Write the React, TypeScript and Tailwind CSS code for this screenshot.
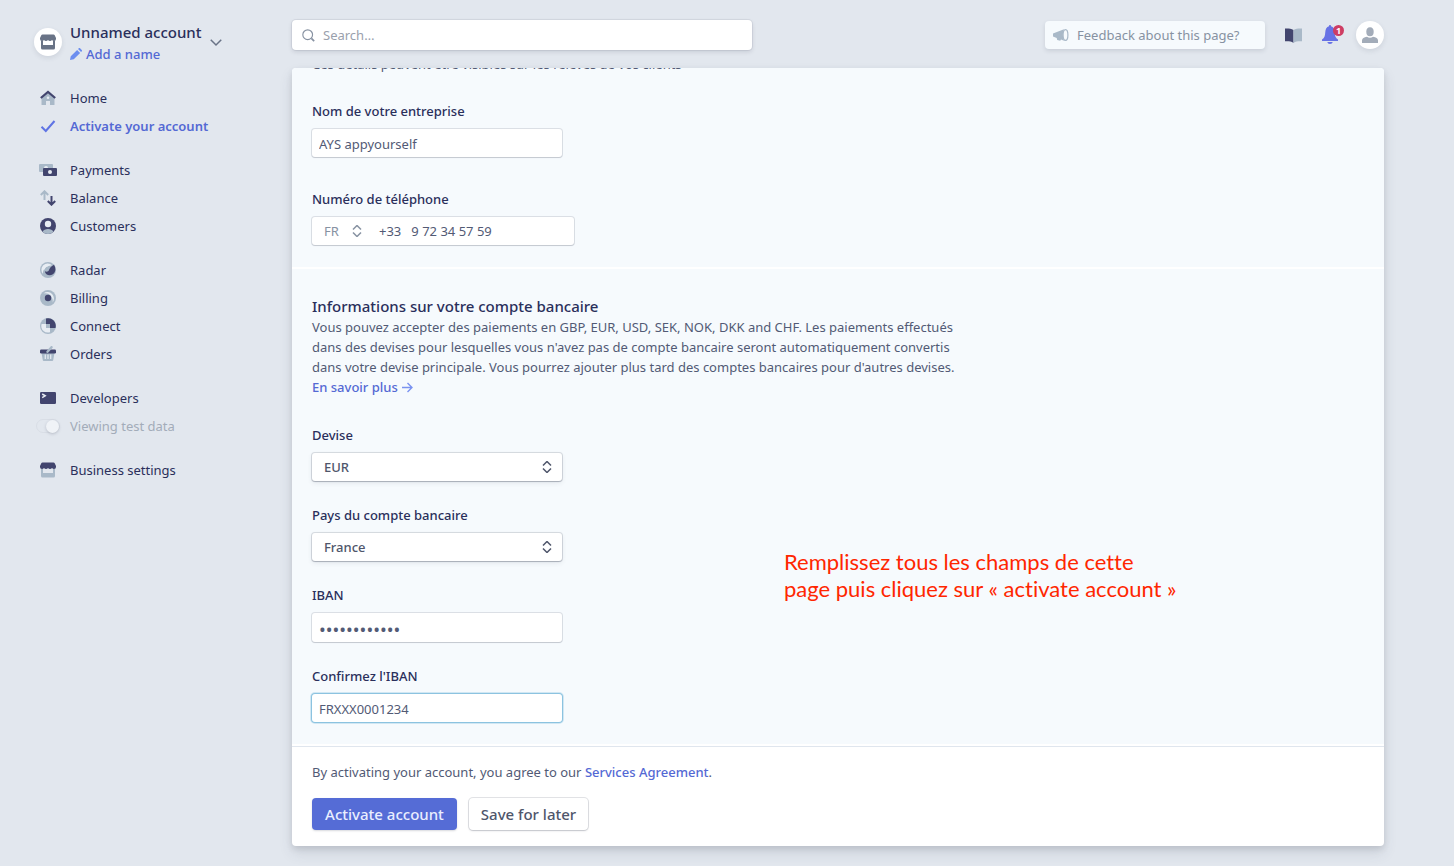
import { useState } from 'react'
import type { ReactNode } from 'react'
import clsx from 'clsx'

const DARK = '#42456e'
const LIGHT = '#a9b9c8'
const PAPER = '#e8edf3'

function Icon({ children, size = 16 }: { children: ReactNode; size?: number }) {
  return (
    <svg width={size} height={size} viewBox="0 0 16 16" fill="none" aria-hidden="true" className="shrink-0">
      {children}
    </svg>
  )
}

function StoreIcon({ top = DARK, base = LIGHT, size = 16 }: { top?: string; base?: string; size?: number }) {
  return (
    <Icon size={size}>
      <path d="M1 6.500h2V11h10V6.500h2V14a1.500 1.500 0 0 1-1.500 1.500h-11A1.500 1.500 0 0 1 1 14z" fill={base} />
      <path d="M2.500.5h11c.6 0 1 .3 1.200.8L16 4v1a2 2 0 0 1-2 2c-.8 0-1.500-.4-2-1-.5.600-1.200 1-2 1s-1.500-.4-2-1c-.5.600-1.200 1-2 1s-1.500-.4-2-1c-.5.600-1.200 1-2 1a2 2 0 0 1-2-2V4l1.300-2.700c.2-.5.600-.8 1.200-.8z" fill={top} />
    </Icon>
  )
}

const icons = {
  home: (
    <Icon>
      <path d="M8 3l6.500 5v6.500a.5.5 0 0 1-.5.5h-4v-4H6v4H2a.5.5 0 0 1-.5-.5V8z" fill={LIGHT} />
      <circle cx="8" cy="7.700" r="1.300" fill={PAPER} />
      <path d="M.8 8L8 2l7.200 6" stroke={DARK} strokeWidth="2.200" />
    </Icon>
  ),
  check: (
    <Icon>
      <path d="M1.500 8.800l4.300 4.200L14.500 3" stroke="#5f74e4" strokeWidth="2" />
    </Icon>
  ),
  payments: (
    <svg width="18" height="16" viewBox="0 0 18 16" fill="none" aria-hidden="true">
      <rect x="0" y="2" width="14" height="8" rx="1" fill={LIGHT} />
      <circle cx="7" cy="6" r="2" fill={PAPER} />
      <rect x="4" y="6" width="14" height="8" rx="1" fill={DARK} />
      <circle cx="11" cy="10" r="2" fill={PAPER} />
    </svg>
  ),
  balance: (
    <Icon>
      <path d="M4.500 10V1.500M.8 5l3.700-3.700L8.200 5" stroke={LIGHT} strokeWidth="2" />
      <path d="M11.500 6v8.500M7.800 11l3.700 3.700 3.700-3.700" stroke={DARK} strokeWidth="2" />
    </Icon>
  ),
  customers: (
    <Icon>
      <circle cx="8" cy="8" r="8" fill={DARK} />
      <path d="M2.500 13.800a8 8 0 0 0 11 0C12.500 11.800 10.500 11 8 11s-4.500.8-5.500 2.800z" fill={LIGHT} />
      <circle cx="8" cy="6" r="3.200" fill={PAPER} />
    </Icon>
  ),
  radar: (
    <Icon>
      <circle cx="8" cy="8" r="8" fill={LIGHT} />
      <path d="M12 3.200A6.300 6.300 0 0 0 3 12C2.600 8 5 4 12 3.200z" fill={PAPER} />
      <path d="M4 7.500A4.500 4.500 0 0 1 8 3.500" stroke={PAPER} strokeWidth="1.600" />
      <path d="M14 2.700c2.300 3.500 1.700 8-1.500 9.800-3.100 1.700-7.400.2-7.600-3.300C6.800 10.200 8.500 9.300 9 8c.6-1.900 2-3.600 5-5.300z" fill={DARK} />
    </Icon>
  ),
  billing: (
    <Icon>
      <circle cx="8" cy="8" r="8" fill={LIGHT} />
      <path d="M3.500 3.500A6.400 6.400 0 0 1 12.500 12.500C14 7.500 9 2 3.500 3.500z" fill={PAPER} />
      <circle cx="8" cy="8" r="3.200" fill={DARK} />
    </Icon>
  ),
  connect: (
    <Icon>
      <circle cx="8" cy="8" r="8" fill={LIGHT} />
      <path d="M10 6v8.200A6.600 6.600 0 0 1 1.600 6z" fill={PAPER} />
      <path d="M6 10V.4A7.800 7.800 0 0 1 15.500 10z" fill={DARK} />
      <path d="M6 6h4v4H6z" fill={LIGHT} />
    </Icon>
  ),
  orders: (
    <Icon>
      <path d="M1.500 7h13l-1.300 7.200a1 1 0 0 1-1 .8H3.800a1 1 0 0 1-1-.8z" fill={LIGHT} />
      <path d="M5.300 8.500v4.500M8 8.500v4.500M10.700 8.500v4.500" stroke={PAPER} strokeWidth="1.200" />
      <rect x="0" y="3.500" width="16" height="4" rx="1.200" fill={DARK} />
      <path d="M7.500 5.800L11.500 1.200" stroke={LIGHT} strokeWidth="2.400" strokeLinecap="round" />
    </Icon>
  ),
  developers: (
    <Icon>
      <rect x="0" y="2" width="16" height="12" rx="1.200" fill={DARK} />
      <path d="M2.200 4l3 1.800-3 1.800" stroke={PAPER} strokeWidth="1.500" />
    </Icon>
  ),
  store: <StoreIcon />,
}

type NavItem = { label: string; icon: keyof typeof icons; active?: boolean }

const NAV: NavItem[][] = [
  [
    { label: 'Home', icon: 'home' },
    { label: 'Activate your account', icon: 'check', active: true },
  ],
  [
    { label: 'Payments', icon: 'payments' },
    { label: 'Balance', icon: 'balance' },
    { label: 'Customers', icon: 'customers' },
  ],
  [
    { label: 'Radar', icon: 'radar' },
    { label: 'Billing', icon: 'billing' },
    { label: 'Connect', icon: 'connect' },
    { label: 'Orders', icon: 'orders' },
  ],
  [{ label: 'Developers', icon: 'developers' }],
  [{ label: 'Business settings', icon: 'store' }],
]

function NavLink({ item }: { item: NavItem }) {
  return (
    <a href="#" className={clsx('flex h-7 items-center gap-2', item.active ? 'font-semibold text-[#5469d4]' : 'text-[#2a2f5b]')}>
      <span className="flex w-7 justify-center">{icons[item.icon]}</span>
      {item.label}
    </a>
  )
}

function Sidebar() {
  const [testData, setTestData] = useState(true)
  return (
    <aside className="w-[284px] shrink-0 pt-5 pl-[34px]">
      <div className="flex items-center gap-2">
        <span className="flex size-7 items-center justify-center rounded-full bg-white shadow-[0_2px_5px_rgba(60,66,87,0.12)]">
          <StoreIcon top="#697386" base="#697386" />
        </span>
        <div>
          <button className="block text-[15px] leading-6 font-medium text-[#2a2f5b]">Unnamed account</button>
          <a href="#" className="flex items-center gap-1 font-medium text-[#5469d4]">
            <Icon size={12}>
              <path d="M0 16l1-5 8.500-8.500 4 4L5 15zM10.700 1.300l1-1a1.200 1.200 0 0 1 1.700 0l2.300 2.300a1.200 1.200 0 0 1 0 1.700l-1 1z" fill="#6c8eef" />
            </Icon>
            Add a name
          </a>
        </div>
        <Icon size={12}>
          <path d="M1 5l7 7 7-7" stroke="#697386" strokeWidth="2" />
        </Icon>
      </div>
      <nav className="mt-5 flex flex-col gap-4">
        {NAV.map((group, i) => (
          <div key={i}>
            {group.map((item) => <NavLink key={item.label} item={item} />)}
            {group[0].icon === 'developers' && (
              <label className="flex h-7 items-center gap-2 text-[#a3acb9]">
                <span className="flex w-7 justify-center">
                  <input
                    type="checkbox"
                    role="switch"
                    checked={testData}
                    onChange={(e) => setTestData(e.target.checked)}
                    className="flex h-[14px] w-6 appearance-none items-center rounded-full border border-[#d9dee6] before:size-[13px] before:rounded-full before:bg-[#f0f3f7] before:shadow-[0_1px_3px_rgba(60,66,87,0.25)] checked:justify-end"
                  />
                </span>
                Viewing test data
              </label>
            )}
          </div>
        ))}
      </nav>
    </aside>
  )
}

function TopBar() {
  return (
    <header className="flex items-center">
      <label className="flex h-[30px] w-[460px] items-center gap-2 rounded-sm bg-white px-[10px] shadow-[0_0_0_1px_rgba(60,66,87,0.08),0_2px_4px_rgba(60,66,87,0.16)]">
        <Icon size={13}>
          <circle cx="7" cy="7" r="6" stroke="#8792a2" strokeWidth="1.400" />
          <path d="M11.500 11.500l3.500 3.500" stroke="#8792a2" strokeWidth="2" />
        </Icon>
        <input aria-label="Search" placeholder="Search…" className="min-w-0 flex-1 outline-none placeholder:text-[#9aa1ad]" />
      </label>
      <div className="ml-auto flex items-center">
        <button className="flex h-7 w-[220px] items-center gap-2 rounded-sm bg-[#f6fafd] pl-2 text-[#8792a2] shadow-[0_2px_4px_rgba(60,66,87,0.14)]">
          <Icon>
            <path d="M0 6.500L11 2.300c-1.500 3.400-1.500 8 0 11.400l-3-1.200-.8 1.200-3-.8-.5-2L0 9.500z" fill={LIGHT} />
            <ellipse cx="12.500" cy="8" rx="2.400" ry="5.400" stroke={LIGHT} strokeWidth="1.200" />
          </Icon>
          Feedback about this page?
        </button>
        <button aria-label="Documentation" className="ml-5">
          <svg width="17" height="16" viewBox="0 0 17 16" aria-hidden="true">
            <path d="M0 1.500c3 0 6-.2 8.500 1.500v13C6 14 3 14.300 0 14.300z" fill={DARK} />
            <path d="M17 1.500c-3 0-6-.2-8.500 1.500v13c2.500-2 5.500-1.700 8.500-1.700z" fill={LIGHT} />
          </svg>
        </button>
        <button aria-label="Notifications" className="relative ml-5">
          <svg width="16" height="20" viewBox="0 0 16 20" aria-hidden="true">
            <path d="M8 0c.7 0 1 .5 1 1.300C11.500 2 12.500 4 12.700 7c.2 4 .8 6 3.300 7.500V16H0v-1.500C2.500 13 3 11 3.300 7 3.500 4 4.500 2 7 1.300 7 .5 7.300 0 8 0zM5.300 17h5.400c-.3 1.300-1.300 2-2.700 2s-2.400-.7-2.700-2z" fill="#6772e5" />
          </svg>
          <span className="absolute top-0 left-[11px] flex size-[11px] items-center justify-center rounded-full bg-[#cd3d64] text-[9px] leading-none font-bold text-white">1</span>
        </button>
        <button aria-label="Profile" className="ml-[18px] flex size-7 items-center justify-center rounded-full bg-white shadow-[0_2px_5px_rgba(60,66,87,0.12)]">
          <Icon>
            <ellipse cx="8" cy="4.700" rx="3.700" ry="4.500" fill="#a3acb9" />
            <path d="M0 16v-2.500C0 11.500 2 10.300 5 9.800c1.800 1.200 4.200 1.200 6 0 3 .5 5 1.700 5 3.700V16z" fill="#a3acb9" />
          </Icon>
        </button>
      </div>
    </header>
  )
}

const fieldRing = 'shadow-[0_0_0_1px_rgba(60,66,87,0.14),0_1px_1px_rgba(60,66,87,0.14)]'

function Field({ id, label, children }: { id: string; label: string; children: ReactNode }) {
  return (
    <div>
      <label htmlFor={id} className="mb-2 block w-fit font-medium text-[#2a2f5b]">{label}</label>
      {children}
    </div>
  )
}

function Chevrons({ className }: { className?: string }) {
  return (
    <svg width="10" height="12" viewBox="0 0 10 12" fill="none" stroke="currentColor" strokeWidth="1.500" aria-hidden="true"
      className={clsx('pointer-events-none absolute top-2', className)}>
      <path d="M1 4.500l4-4 4 4M1 7.500l4 4 4-4" />
    </svg>
  )
}

function Select({ id, options }: { id: string; options: string[] }) {
  return (
    <div className="relative w-[250px] text-[#4f566b]">
      <select id={id} className="h-7 w-full appearance-none rounded-[3px] bg-white pl-3 font-medium text-[#4f566b] shadow-[0_0_0_1px_rgba(60,66,87,0.16),0_1px_1px_rgba(60,66,87,0.24),0_2px_5px_rgba(60,66,87,0.1)]">
        {options.map((o) => <option key={o}>{o}</option>)}
      </select>
      <Chevrons className="right-[10px]" />
    </div>
  )
}

const inputClass = 'block w-[250px] rounded-[3px] bg-white px-[7px] pt-0.5'

export default function App() {
  return (
    <div className="flex min-h-screen bg-[#e2e7ee] font-['Noto_Sans',sans-serif] text-[13px] leading-5 text-[#525a75]">
      <Sidebar />
      <main className="min-w-0 flex-1 pt-5 pr-[70px] pb-5 pl-2">
        <TopBar />
        <div className="mt-[18px] overflow-hidden rounded bg-white shadow-[0_7px_14px_rgba(60,66,87,0.12),0_3px_6px_rgba(0,0,0,0.1)]">
          <section className="bg-[#f6fafd] px-5 pb-[22px]">
            {/* scrolled out under the top edge of the panel */}
            <p className="-mt-[14px] mb-[27px]">Ces détails peuvent être visibles sur les relevés de vos clients</p>
            <div className="flex flex-col gap-8">
              <Field id="company" label="Nom de votre entreprise">
                <input id="company" defaultValue="AYS appyourself" className={clsx(inputClass, fieldRing, 'h-7')} />
              </Field>
              <Field id="phone" label="Numéro de téléphone">
                <div className={clsx('flex h-7 w-[262px] items-center rounded-[3px] bg-white', fieldRing)}>
                  <div className="relative h-7 w-[67px] text-[#8792a2]">
                    <select aria-label="Indicatif du pays" className="h-full w-full appearance-none pl-3">
                      <option>FR</option>
                    </select>
                    <Chevrons className="left-10" />
                  </div>
                  <span>+33</span>
                  <input id="phone" type="tel" defaultValue="9 72 34 57 59" className="ml-[10px] min-w-0 flex-1 outline-none" />
                </div>
              </Field>
            </div>
          </section>

          <section className="relative mt-0.5 bg-[#f6fafd] px-5 pt-[26px] pb-[22px]">
            <h2 className="text-[15px] leading-[22px] font-medium text-[#2a2f5b]">Informations sur votre compte bancaire</h2>
            <p className="max-w-[664px]">
              Vous pouvez accepter des paiements en GBP, EUR, USD, SEK, NOK, DKK and CHF. Les paiements effectués
              dans des devises pour lesquelles vous n'avez pas de compte bancaire seront automatiquement convertis
              dans votre devise principale. Vous pourrez ajouter plus tard des comptes bancaires pour d'autres devises.
            </p>
            <a href="#" className="flex w-fit items-center gap-1 font-medium text-[#5469d4]">
              En savoir plus
              <Icon size={11}>
                <path d="M0 8h14M8 1.500L14.500 8 8 14.500" stroke="#7a92f0" strokeWidth="2" />
              </Icon>
            </a>
            <div className="mt-7 flex flex-col gap-6">
              <Field id="currency" label="Devise">
                <Select id="currency" options={['EUR', 'GBP', 'USD', 'SEK', 'NOK', 'DKK', 'CHF']} />
              </Field>
              <Field id="country" label="Pays du compte bancaire">
                <Select id="country" options={['France']} />
              </Field>
              <Field id="iban" label="IBAN">
                <input id="iban" type="password" defaultValue="FRXXX0001234" className={clsx(inputClass, fieldRing, 'h-[29px] text-lg leading-5')} />
              </Field>
              <Field id="iban-confirm" label="Confirmez l'IBAN">
                <input id="iban-confirm" defaultValue="FRXXX0001234"
                  className={clsx(inputClass, 'h-7 shadow-[0_0_0_1px_#8cc3e0,0_0_0_2px_rgba(140,195,224,0.35)] outline-none')} />
              </Field>
            </div>
            <p className="absolute top-[279px] left-[492px] w-[400px] font-['Lato',sans-serif] text-[22px] leading-[27px] text-[#ff2600] [font-variant-ligatures:none]">
              Remplissez tous les champs de cette page puis cliquez sur « activate account »
            </p>
          </section>

          <footer className="mt-0.5 border-t border-[#e0e6ee] px-5 pt-[15px] pb-4">
            <p>
              By activating your account, you agree to our{' '}
              <a href="#" className="font-medium text-[#5469d4]">Services Agreement</a>.
            </p>
            <div className="mt-4 flex gap-3 text-[15px] font-medium">
              <button className="h-8 w-[145px] rounded bg-[#556cd6] text-[#e9eeff] shadow-[0_1px_2px_rgba(60,66,87,0.2)]">Activate account</button>
              <button className="h-8 w-[119px] rounded bg-white text-[#4f566b] shadow-[0_0_0_1px_rgba(60,66,87,0.14),0_1px_2px_rgba(60,66,87,0.2)]">Save for later</button>
            </div>
          </footer>
        </div>
      </main>
    </div>
  )
}
